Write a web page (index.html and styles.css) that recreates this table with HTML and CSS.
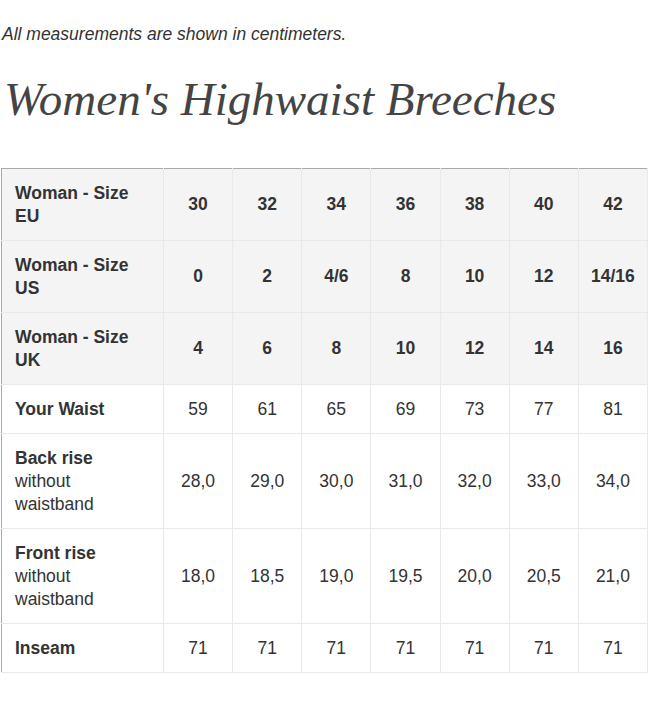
FILE: index.html
```html
<!DOCTYPE html>
<html>
<head>
<meta charset="utf-8">
<link rel="stylesheet" href="styles.css">
</head>
<body>
<div class="page">
  <p class="note">All measurements are shown in centimeters.</p>
  <h1 class="title">Women's Highwaist Breeches</h1>
  <table class="sizes">
    <tbody>
      <tr class="head">
        <th class="label">Woman - Size EU</th>
        <th>30</th><th>32</th><th>34</th><th>36</th><th>38</th><th>40</th><th>42</th>
      </tr>
      <tr class="head">
        <th class="label">Woman - Size US</th>
        <th>0</th><th>2</th><th>4/6</th><th>8</th><th>10</th><th>12</th><th>14/16</th>
      </tr>
      <tr class="head">
        <th class="label">Woman - Size UK</th>
        <th>4</th><th>6</th><th>8</th><th>10</th><th>12</th><th>14</th><th>16</th>
      </tr>
      <tr>
        <td class="label"><b>Your Waist</b></td>
        <td>59</td><td>61</td><td>65</td><td>69</td><td>73</td><td>77</td><td>81</td>
      </tr>
      <tr>
        <td class="label"><b>Back rise</b><br>without<br>waistband</td>
        <td>28,0</td><td>29,0</td><td>30,0</td><td>31,0</td><td>32,0</td><td>33,0</td><td>34,0</td>
      </tr>
      <tr>
        <td class="label"><b>Front rise</b><br>without<br>waistband</td>
        <td>18,0</td><td>18,5</td><td>19,0</td><td>19,5</td><td>20,0</td><td>20,5</td><td>21,0</td>
      </tr>
      <tr>
        <td class="label"><b>Inseam</b></td>
        <td>71</td><td>71</td><td>71</td><td>71</td><td>71</td><td>71</td><td>71</td>
      </tr>
    </tbody>
  </table>
</div>
</body>
</html>
```

FILE: styles.css
```css
html, body {
  margin: 0;
  padding: 0;
  background: #ffffff;
}
.page {
  padding: 23px 0 0 1px;
  font-family: "Liberation Sans", Arial, sans-serif;
  color: #333333;
}
.note {
  margin: 0 0 0 1px;
  font-size: 17.5px;
  line-height: 23px;
  font-style: italic;
}
.title {
  margin: 26px 0 0 3px;
  font-family: "Liberation Serif", "Times New Roman", serif;
  font-style: italic;
  font-weight: normal;
  font-size: 47px;
  line-height: 54px;
  color: #444444;
}
.sizes {
  margin-top: 42px;
  width: 647px;
  border-collapse: collapse;
  table-layout: fixed;
  font-size: 17.5px;
  line-height: 23px;
  border-top: 1px solid #a9a9a9;
  border-left: 1px solid #a9a9a9;
}
.sizes th,
.sizes td {
  border: 1px solid #e9e9e9;
  padding: 12.5px 2px;
  text-align: center;
  vertical-align: middle;
}
.sizes tr:first-child th {
  border-top: 1px solid #a9a9a9;
}
.sizes .label {
  width: 135px;
  padding-left: 13px;
  padding-right: 13px;
  text-align: left;
  border-left: 1px solid #a9a9a9;
}
.sizes th {
  font-weight: bold;
}
.head th {
  background: #f4f4f4;
}
.sizes td {
  background: #ffffff;
}
```
